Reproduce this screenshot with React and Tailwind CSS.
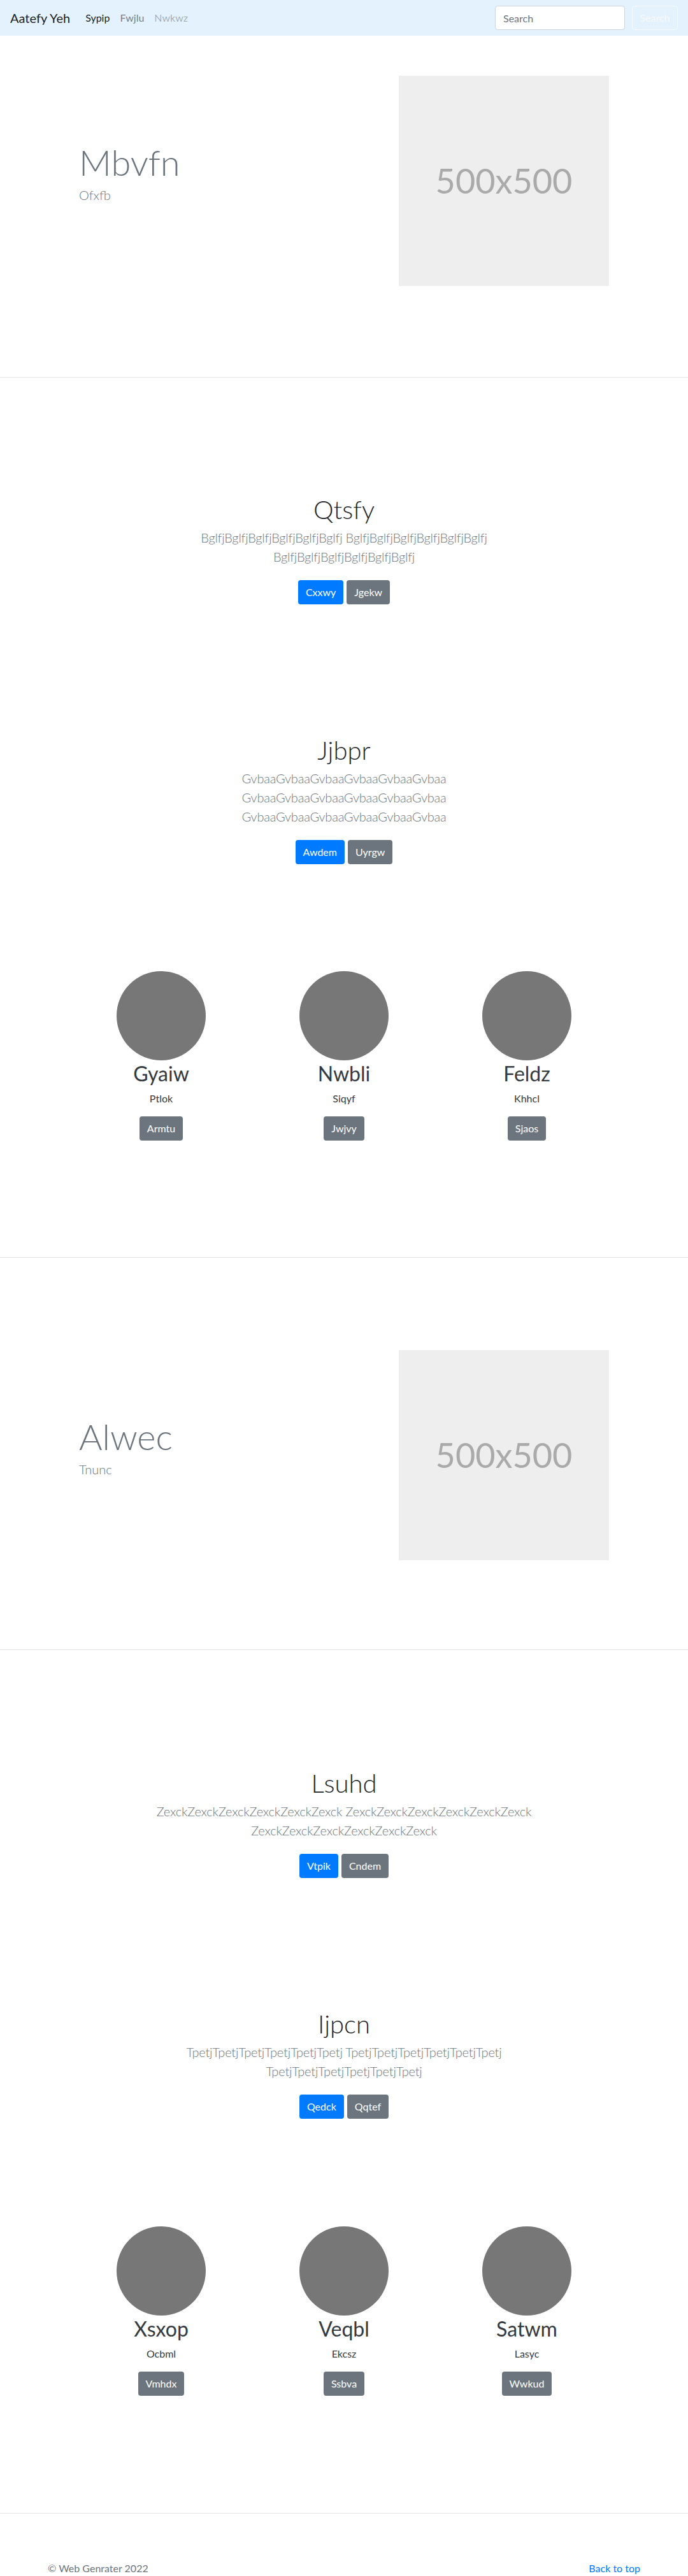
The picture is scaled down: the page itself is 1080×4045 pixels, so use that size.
import React from "react";

const rep = (w) => w.repeat(6);

function Navbar() {
  return (
    <nav className="flex h-[56px] items-center bg-[#e3f2fd] px-4">
      <a className="mr-4 text-[20px] leading-[30px] text-black/90">Aatefy Yeh</a>
      <ul className="flex text-[16px] leading-[24px]">
        <li><a className="px-2 text-black/90">Sypip</a></li>
        <li><a className="px-2 text-black/50">Fwjlu</a></li>
        <li><a className="px-2 text-black/30">Nwkwz</a></li>
      </ul>
      <form className="ml-auto flex items-center">
        <input
          type="text"
          placeholder="Search"
          className="mr-[11px] h-[38px] w-[204px] rounded border border-[#ced4da] bg-white px-3 text-[16px] text-[#495057] placeholder:text-[#6c757d] focus:outline-none"
        />
        <button type="button" className="h-[38px] w-[72px] rounded border border-[#f8f9fa] text-[16px] text-[#f8f9fa]">
          Search
        </button>
      </form>
    </nav>
  );
}

function Hero({ title, sub, className }) {
  return (
    <section className={`border-b border-[#e5e5e5] ${className}`}>
      <div className="mx-auto flex w-[960px] items-center">
        <div className="flex-1 pb-[26px] pl-[64px]">
          <h1 className="text-[56px] font-light leading-[1.2] text-[#6c757d]">{title}</h1>
          <p className="mt-[2px] text-[20px] font-light leading-[1.5] text-[#6c757d]">{sub}</p>
        </div>
        <div className="mr-[64px] flex h-[330px] w-[330px] items-center justify-center bg-[#eeeeee]">
          <span className="text-[54px] leading-none text-[#aaaaaa]">500x500</span>
        </div>
      </div>
    </section>
  );
}

function Jumbo({ title, word, buttons, className }) {
  return (
    <section className={`text-center ${className}`}>
      <h1 className="text-[40px] font-light leading-[48px] text-[#212529]">{title}</h1>
      <p className="mx-auto mt-[5px] max-w-[610px] text-[20px] font-light leading-[30px] tracking-[-0.2px] text-[#6c757d]">
        {[rep(word), rep(word), rep(word)].join(" ")}
      </p>
      <div className="mt-[22px] flex justify-center gap-[5px]">
        <a className="rounded bg-[#007bff] px-3 py-[7px] text-[16px] leading-[24px] text-white">{buttons[0]}</a>
        <a className="rounded bg-[#6c757d] px-3 py-[7px] text-[16px] leading-[24px] text-white">{buttons[1]}</a>
      </div>
    </section>
  );
}

function Cards({ items, className }) {
  return (
    <section className={`mx-auto grid w-[861px] grid-cols-3 text-center ${className}`}>
      {items.map((it) => (
        <div key={it.name} className="flex flex-col items-center">
          <div className="h-[140px] w-[140px] rounded-full bg-[#777777]" />
          <h2 className="mt-[2px] text-[32px] leading-[38px] text-[#343a40]">{it.name}</h2>
          <p className="mt-2 text-[16px] leading-[24px] text-[#343a40]">{it.sub}</p>
          <a className="mt-4 rounded bg-[#6c757d] px-3 py-[7px] text-[16px] leading-[24px] text-white">{it.btn}</a>
        </div>
      ))}
    </section>
  );
}

export default function App() {
  return (
    <div className="bg-white font-[Lato,'Liberation_Sans',sans-serif] text-[#212529]">
      <Navbar />
      <Hero title="Mbvfn" sub="Ofxfb" className="pt-[63px] pb-[143px]" />
      <Jumbo title="Qtsfy" word="Bglfj" buttons={["Cxxwy", "Jgekw"]} className="pt-[183px]" />
      <Jumbo title="Jjbpr" word="Gvbaa" buttons={["Awdem", "Uyrgw"]} className="pt-[205px]" />
      <Cards
        className="pt-[168px] pb-[183px]"
        items={[
          { name: "Gyaiw", sub: "Ptlok", btn: "Armtu" },
          { name: "Nwbli", sub: "Siqyf", btn: "Jwjvy" },
          { name: "Feldz", sub: "Khhcl", btn: "Sjaos" },
        ]}
      />
      <div className="border-t border-[#e5e5e5]" />
      <Hero title="Alwec" sub="Tnunc" className="pt-[145px] pb-[140px]" />
      <Jumbo title="Lsuhd" word="Zexck" buttons={["Vtpik", "Cndem"]} className="pt-[185px]" />
      <Jumbo title="Ijpcn" word="Tpetj" buttons={["Qedck", "Qqtef"]} className="pt-[205px]" />
      <Cards
        className="pt-[169px] pb-[184px]"
        items={[
          { name: "Xsxop", sub: "Ocbml", btn: "Vmhdx" },
          { name: "Veqbl", sub: "Ekcsz", btn: "Ssbva" },
          { name: "Satwm", sub: "Lasyc", btn: "Wwkud" },
        ]}
      />
      <footer className="border-t border-[#e5e5e5] pt-[74px]">
        <div className="mx-auto flex w-[930px] justify-between text-[16px] leading-[24px]">
          <p className="text-[#6c757d]">© Web Genrater 2022</p>
          <a className="text-[#007bff]">Back to top</a>
        </div>
      </footer>
    </div>
  );
}
